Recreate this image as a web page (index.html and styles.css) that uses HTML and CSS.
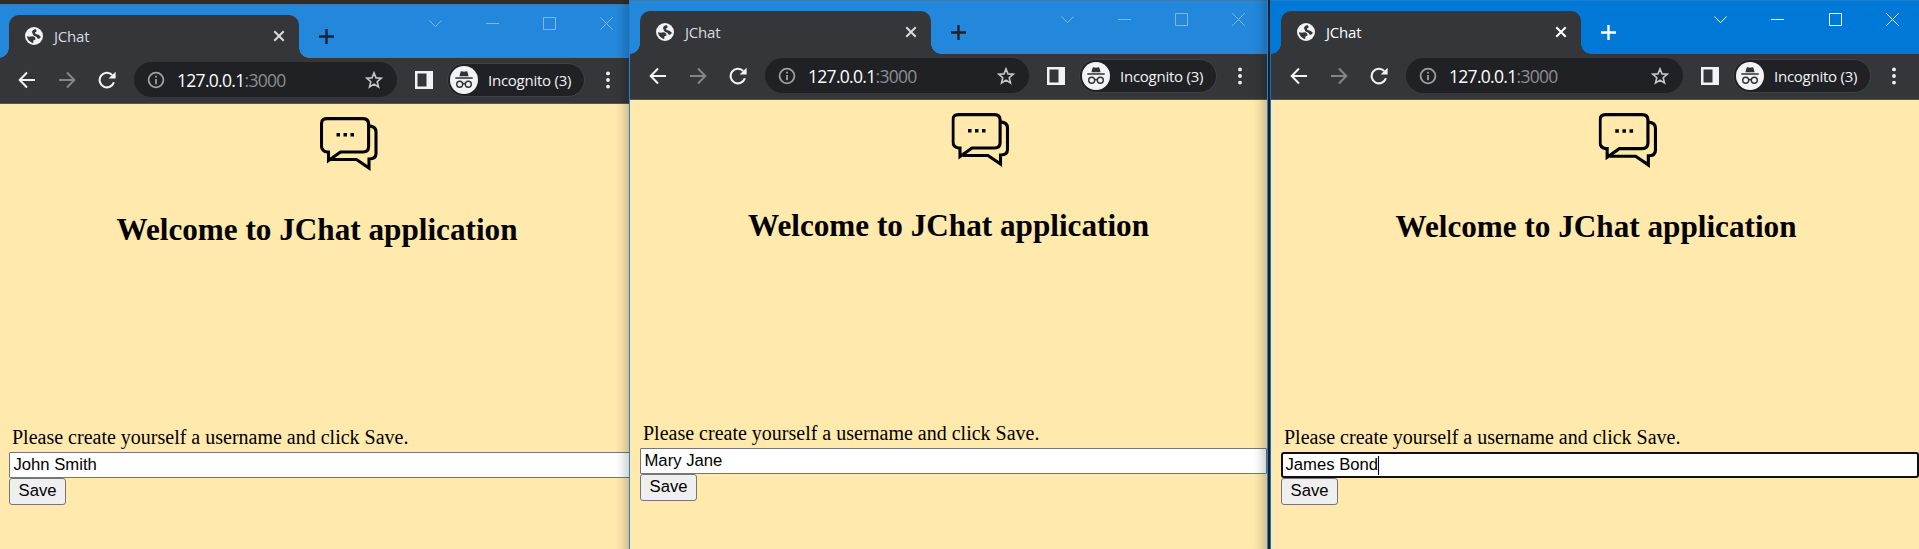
FILE: index.html
```
<!DOCTYPE html>
<html lang="en">
<head>
<meta charset="utf-8">
<title>JChat</title>
<link rel="stylesheet" href="styles.css">
</head>
<body>
<svg class="sprite" aria-hidden="true">
  <symbol id="globe" viewBox="0 0 18 18"><circle cx="9" cy="9" r="9" fill="#f1f3f4"/><path d="M10.3 2.1C7.5 3 6.6 4.4 7.3 6.1C8 7.600 8.200 8.600 9.400 9C11.500 9.500 12.200 10.200 12.400 11.600C13.600 11.900 15.300 11.500 15.900 9.400C15 9.300 14.300 8.500 13.600 7.800C12.300 7 10.500 7.200 9.900 6.200C9.600 5.200 11.300 5.200 11.600 4.300C11.700 3.400 11 2.900 10.300 2.100ZM2 8.900C2.200 12 4.600 15.300 8.300 15.900V13.600L10.500 12.500C10.800 10.900 9.200 9.500 7.600 9.300C5.700 9.500 3.500 10.200 2 8.900Z" fill="#35363a"/></symbol>
  <symbol id="close" viewBox="0 0 12 12"><path d="M1.3 1.3L10.7 10.7M10.7 1.3L1.3 10.7" fill="none" stroke="currentColor" stroke-width="2"/></symbol>
  <symbol id="plus" viewBox="0 0 15 15"><path d="M7.5 0V15M0 7.5H15" stroke="currentColor" stroke-width="2.4"/></symbol>
  <symbol id="chevron" viewBox="0 0 13 13"><path d="M.5 3.5L6.5 9.7L12.5 3.5" fill="none" stroke="currentColor"/></symbol>
  <symbol id="minimize" viewBox="0 0 13 13"><path d="M0 6.5H13" stroke="currentColor"/></symbol>
  <symbol id="maximize" viewBox="0 0 13 13"><path d="M.5 .5H12.5V12.5H.5Z" fill="none" stroke="currentColor"/></symbol>
  <symbol id="exit" viewBox="0 0 13 13"><path d="M.3 .3L12.7 12.7M12.7 .3L.3 12.7" stroke="currentColor"/></symbol>
  <symbol id="back" viewBox="0 0 18 18"><path d="M17 9H2.2M9 1.5L1.7 9L9 16.5" fill="none" stroke="currentColor" stroke-width="2"/></symbol>
  <symbol id="forward" viewBox="0 0 18 18"><path d="M1 9H15.8M9 1.5L16.3 9L9 16.5" fill="none" stroke="currentColor" stroke-width="2"/></symbol>
  <symbol id="reload" viewBox="0 0 18 18"><path d="M15.9 11.3A7.3 7.3 0 1 1 14.2 4" fill="none" stroke="#f1f3f4" stroke-width="2.1"/><path d="M17.6 .8V7.6H10.6Z" fill="#f1f3f4"/></symbol>
  <symbol id="info" viewBox="0 0 18 18"><circle cx="9" cy="9" r="7.4" fill="none" stroke="#9aa0a6" stroke-width="1.8"/><path d="M9 4.8V6.6M9 8V13.2" stroke="#9aa0a6" stroke-width="1.8"/></symbol>
  <symbol id="star" viewBox="0 0 18 18"><path d="M9 1.9L11 6.9L16.3 7.2L12.2 10.7L13.5 16L9 13.1L4.5 16L5.8 10.7L1.7 7.2L7 6.9Z" fill="none" stroke="#c4c7ca" stroke-width="1.6"/></symbol>
  <symbol id="panel" viewBox="0 0 18 18"><path fill-rule="evenodd" d="M0 0H18V18H0ZM2.5 2.5V15.5H11.5V2.5Z" fill="#f1f3f4"/></symbol>
  <symbol id="incognito" viewBox="0 0 28 28"><circle cx="14" cy="14" r="14" fill="#f1f3f4"/><path d="M9.4 10.3L10.7 5.6Q11 5 11.7 5.2L14 5.8L16.3 5.2Q17 5 17.3 5.6L18.6 10.3ZM5.3 11.2H22.7V12.7H5.3Z" fill="#303134"/><g fill="none" stroke="#303134" stroke-width="1.4"><circle cx="9.7" cy="18.3" r="3"/><circle cx="18.3" cy="18.3" r="3"/><path d="M12.7 18Q14 17 15.3 18"/></g></symbol>
  <symbol id="more" viewBox="0 0 4 18"><g fill="#f1f3f4"><circle cx="2" cy="2.4" r="1.9"/><circle cx="2" cy="9" r="1.9"/><circle cx="2" cy="15.6" r="1.9"/></g></symbol>
  <symbol id="chat" viewBox="0 0 58 55"><g fill="none" stroke="#000" stroke-width="3.1"><path d="M7 1.6H43Q48.6 1.6 48.6 7V29.5Q48.6 35 43 35H20.500L8.500 43.500V35H7Q1.5 34 1.5 29V7Q1.5 1.6 7 1.6Z"/><path d="M49 8.9Q56 9.3 56 15V36.500Q56 42 49 42V51L36.500 42.500H11"/></g><path d="M16.500 16H20V19.500H16.500ZM23.500 16H27V19.500H23.500ZM30.500 16H34V19.500H30.500Z"/></symbol>
</svg>
<main class="desktop">

  <section class="slot slot-left">
    <div class="window">
      <header class="titlebar">
        <div class="tab"><svg class="globe"><use href="#globe"/></svg><span class="tab-title">JChat</span><svg class="tab-close"><use href="#close"/></svg></div>
        <svg class="new-tab"><use href="#plus"/></svg>
        <div class="controls"><svg><use href="#chevron"/></svg><svg><use href="#minimize"/></svg><svg><use href="#maximize"/></svg><svg><use href="#exit"/></svg></div>
      </header>
      <nav class="toolbar">
        <svg class="nav-icon"><use href="#back"/></svg><svg class="nav-icon dim"><use href="#forward"/></svg><svg class="nav-icon"><use href="#reload"/></svg>
        <div class="address"><svg class="info"><use href="#info"/></svg><span class="url">127.0.0.1<span class="port">:3000</span></span><svg class="star"><use href="#star"/></svg></div>
        <svg class="panel"><use href="#panel"/></svg>
        <div class="profile"><svg class="avatar"><use href="#incognito"/></svg><span>Incognito (3)</span></div>
        <svg class="more"><use href="#more"/></svg>
      </nav>
      <div class="page">
        <svg class="logo"><use href="#chat"/></svg>
        <h1 class="heading">Welcome to JChat application</h1>
        <form class="form">
          <label class="label">Please create yourself a username and click Save.</label>
          <div class="field">John Smith</div>
          <button class="save" type="button">Save</button>
        </form>
      </div>
    </div>
  </section>

  <section class="slot slot-middle">
    <div class="window">
      <header class="titlebar">
        <div class="tab"><svg class="globe"><use href="#globe"/></svg><span class="tab-title">JChat</span><svg class="tab-close"><use href="#close"/></svg></div>
        <svg class="new-tab"><use href="#plus"/></svg>
        <div class="controls"><svg><use href="#chevron"/></svg><svg><use href="#minimize"/></svg><svg><use href="#maximize"/></svg><svg><use href="#exit"/></svg></div>
      </header>
      <nav class="toolbar">
        <svg class="nav-icon"><use href="#back"/></svg><svg class="nav-icon dim"><use href="#forward"/></svg><svg class="nav-icon"><use href="#reload"/></svg>
        <div class="address"><svg class="info"><use href="#info"/></svg><span class="url">127.0.0.1<span class="port">:3000</span></span><svg class="star"><use href="#star"/></svg></div>
        <svg class="panel"><use href="#panel"/></svg>
        <div class="profile"><svg class="avatar"><use href="#incognito"/></svg><span>Incognito (3)</span></div>
        <svg class="more"><use href="#more"/></svg>
      </nav>
      <div class="page">
        <svg class="logo"><use href="#chat"/></svg>
        <h1 class="heading">Welcome to JChat application</h1>
        <form class="form">
          <label class="label">Please create yourself a username and click Save.</label>
          <div class="field">Mary Jane</div>
          <button class="save" type="button">Save</button>
        </form>
      </div>
    </div>
  </section>

  <section class="slot slot-right">
    <div class="window active">
      <header class="titlebar">
        <div class="tab"><svg class="globe"><use href="#globe"/></svg><span class="tab-title">JChat</span><svg class="tab-close"><use href="#close"/></svg></div>
        <svg class="new-tab"><use href="#plus"/></svg>
        <div class="controls"><svg><use href="#chevron"/></svg><svg><use href="#minimize"/></svg><svg><use href="#maximize"/></svg><svg><use href="#exit"/></svg></div>
      </header>
      <nav class="toolbar">
        <svg class="nav-icon"><use href="#back"/></svg><svg class="nav-icon dim"><use href="#forward"/></svg><svg class="nav-icon"><use href="#reload"/></svg>
        <div class="address"><svg class="info"><use href="#info"/></svg><span class="url">127.0.0.1<span class="port">:3000</span></span><svg class="star"><use href="#star"/></svg></div>
        <svg class="panel"><use href="#panel"/></svg>
        <div class="profile"><svg class="avatar"><use href="#incognito"/></svg><span>Incognito (3)</span></div>
        <svg class="more"><use href="#more"/></svg>
      </nav>
      <div class="page">
        <svg class="logo"><use href="#chat"/></svg>
        <h1 class="heading">Welcome to JChat application</h1>
        <form class="form">
          <label class="label">Please create yourself a username and click Save.</label>
          <div class="field focused">James Bond<span class="caret"></span></div>
          <button class="save" type="button">Save</button>
        </form>
      </div>
    </div>
  </section>

</main>
</body>
</html>
```
FILE: styles.css
```
* { box-sizing: border-box; }
body { margin: 0; background: #202124; overflow: hidden; }
svg { display: block; flex: none; }
.sprite { display: none; }

.desktop {
  display: flex;
  width: 1919px;
  height: 549px;
  overflow: hidden;
  background: #1b1d20;
}

/* Slots clip each window where a neighbour covers it */
.slot { position: relative; flex: none; overflow: hidden; }
.slot-left { width: 629px; padding-top: 4px; background: #2d2d2d; }
.slot-left .window { width: 636px; margin-left: -1px; }
.slot-middle { width: 639px; margin-right: 2px; border: solid #2484d0; border-width: 0 1px; }
.slot-right { width: 649px; border-left: 1px solid #0078d7; }
.slot-right .window { width: 650px; }
.slot-left::after, .slot-middle::after {
  content: "";
  position: absolute;
  top: 0;
  right: 0;
  width: 14px;
  height: 100%;
  background: linear-gradient(to right, rgba(0,0,0,0), rgba(0,0,0,.05) 45%, rgba(0,0,0,.18));
}

.window {
  --frame: #2388dc;
  display: flex;
  flex-direction: column;
  height: 549px;
  color: #dadce0;
  font-family: "Open Sans", "Noto Sans", sans-serif;
}
.window.active { --frame: #0078d7; color: #fff; }

.titlebar {
  display: flex;
  height: 54px;
  padding: 10px 22px 0 10px;
  background: var(--frame);
  border-top: 1px solid #3d7aae;
}
.slot-left .titlebar { padding-right: 22.500px; }
.active .titlebar { border-top-color: #1a80d2; }
.tab {
  position: relative;
  display: flex;
  align-items: center;
  width: 291px;
  height: 43px;
  padding: 0 15px 1px 16px;
  background: #35363a;
  border-radius: 10px 10px 0 0;
}
.slot-left .tab { width: 290px; }
.active .tab { width: 300px; }
.tab::before, .tab::after {
  content: "";
  position: absolute;
  bottom: 0;
  width: 10px;
  height: 10px;
}
.tab::before { left: -10px; background: radial-gradient(circle at 0 0, transparent 9.500px, #35363a 10px); }
.tab::after { right: -10px; background: radial-gradient(circle at 100% 0, transparent 9.500px, #35363a 10px); }
.globe { width: 18px; height: 18px; }
.tab-title { margin-left: 11px; font-size: 15px; line-height: 20px; letter-spacing: -.2px; }
.tab-close { width: 12px; height: 12px; margin-left: auto; margin-right: -1px; }
.new-tab { width: 15px; height: 15px; margin: 14px 0 0 20px; color: #202124; }
.active .new-tab { color: #fff; }
.controls { display: flex; gap: 44px; margin: 2px 0 0 auto; color: #7cb8ea; }
.controls svg { width: 13px; height: 13px; }
.active .controls { gap: 44.300px; color: #fff; }

.toolbar {
  display: flex;
  align-items: center;
  height: 46px;
  padding: 0 25.500px 2px 18.500px;
  background: #35363a;
  border-bottom: 1px solid #55565a;
}
.nav-icon { width: 18px; height: 18px; margin-right: 22px; color: #f1f3f4; }
.nav-icon.dim { color: #85868a; }
.address {
  display: flex;
  align-items: center;
  flex: 1;
  height: 35px;
  margin-left: -3.500px;
  padding: 0 14px 0 13px;
  background: #202124;
  border-radius: 18px;
}
.info { width: 18px; height: 18px; }
.url { margin-left: 12px; color: #fff; font-size: 17.500px; line-height: 24px; letter-spacing: -.7px; white-space: nowrap; }
.port { color: #8b8e92; }
.star { width: 18px; height: 18px; margin-left: auto; }
.panel { width: 18px; height: 18px; margin: 0 14px 0 18.500px; }
.profile {
  display: flex;
  align-items: center;
  width: 138px;
  height: 34px;
  padding-left: 3px;
  color: #f1f3f4;
  background: #202124;
  border: 1px solid #414246;
  border-radius: 17px;
  font-size: 15px;
  letter-spacing: -.25px;
  white-space: nowrap;
}
.avatar { width: 28px; height: 28px; margin-left: -1px; margin-right: 10px; }
.more { width: 4px; height: 18px; margin-left: 20.500px; }

.page {
  flex: 1;
  color: #000;
  background: #ffe9ad;
  font-family: "Liberation Serif", serif;
  padding: 13px 0 0 10px;
}
.logo { width: 58px; height: 55px; margin: 0 auto; transform: translateX(26.500px); }
.slot-left .logo { transform: translateX(27px); }
.active .logo { width: 59px; height: 56px; }
.heading {
  margin: 40px 0 0 -10px;
  font-size: 31.200px;
  line-height: 36px;
  font-weight: bold;
  text-align: center;
  white-space: nowrap;
}
.form { margin-top: 178px; }
.label { display: block; height: 26px; padding-left: 3px; font-size: 20px; line-height: 22px; white-space: nowrap; }
.field {
  display: flex;
  align-items: center;
  height: 26px;
  padding-left: 3.500px;
  color: #000;
  background: #fff;
  border: 1px solid #767676;
  border-radius: 1px;
  font: 16.667px "Liberation Sans", sans-serif;
}
.field.focused { width: 638px; border: 2px solid #101010; padding-left: 2.500px; border-radius: 3px; }
.active .heading { margin-top: 40px; }
.active .form { margin-top: 181px; }
.caret { width: 1px; height: 19px; background: #000; }
.save {
  display: block;
  width: 57px;
  height: 27px;
  padding: 0 0 1px;
  color: #000;
  background: #efefef;
  border: 1px solid #767676;
  border-radius: 3px;
  font: 16.667px "Liberation Sans", sans-serif;
}
```
